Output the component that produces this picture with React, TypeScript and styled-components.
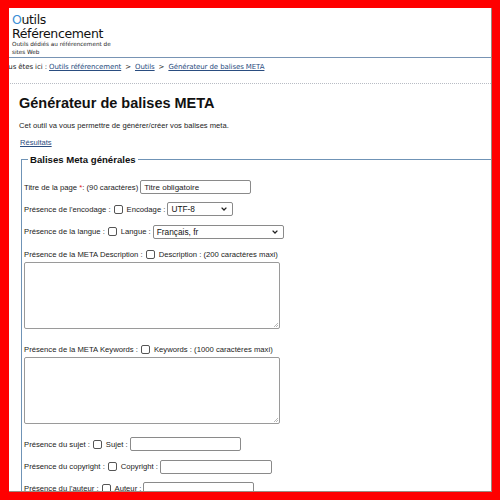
import React from 'react'
import styled, { createGlobalStyle } from 'styled-components'

const GlobalStyle = createGlobalStyle`
  html, body {
    margin: 0;
    padding: 0;
    background: #ff0000;
  }
  body {
    font-family: "Liberation Sans", Arial, sans-serif;
    color: #222;
  }
`

const Viewport = styled.div`
  margin: 8px 0 0 9px;
  width: 482px;
  height: 483px;
  overflow: hidden;
  background: #fff;
  border-right: 1px solid #9a8a80;
  border-bottom: 1px solid #9a8a80;
`

const Header = styled.header`
  box-sizing: border-box;
  padding: 5px 0 0 3px;
  border-bottom: 1px solid #7894b4;
  height: 50px;
`

const SiteTitle = styled.div`
  font-family: "DejaVu Sans", sans-serif;
  font-size: 12.5px;
  line-height: 14px;
  letter-spacing: -0.35px;
  color: #111;
  width: 120px;

  span {
    color: #3b8fd6;
  }
`

const SiteTagline = styled.div`
  font-family: "DejaVu Sans", sans-serif;
  font-size: 5.7px;
  line-height: 8px;
  margin-top: -1px;
  width: 102px;
  color: #222;
`

const Breadcrumb = styled.nav`
  font-family: "DejaVu Sans", sans-serif;
  font-size: 7px;
  letter-spacing: -0.1px;
  line-height: 12px;
  margin-left: -9px;
  padding: 3px 0 10px;
  border-bottom: 1px dotted #b8bcc4;
  color: #222;
  white-space: nowrap;

  a {
    color: #2a4d80;
    text-decoration: underline;
  }
`

const Sep = styled.span`
  margin: 0 4px;
`

const Main = styled.main`
  padding: 11px 0 0 10px;
`

const Title = styled.h1`
  font-family: "Liberation Sans", Arial, sans-serif;
  font-size: 14.5px;
  font-weight: bold;
  margin: 0 0 10px;
  color: #111;
`

const Intro = styled.p`
  font-size: 7.6px;
  margin: 0 0 1px;
  color: #222;
`

const ResultsLink = styled.a`
  display: inline-block;
  font-size: 7.6px;
  color: #2a4d80;
  text-decoration: underline;
  margin-left: 1px;
`

const Fieldset = styled.fieldset`
  margin: 5px -60px 0 2px;
  padding: 15px 0 0 2px;
  border: 1px solid #6f93b6;
  border-right: none;
  border-bottom: none;
`

const Legend = styled.legend`
  font-size: 9.6px;
  font-weight: bold;
  color: #111;
  padding: 0 2px;
  margin-left: 4px;
`

const Row = styled.div`
  display: flex;
  align-items: center;
  font-size: 7.7px;
  color: #222;
  height: 14px;
  margin-bottom: 8.4px;
  white-space: nowrap;
`

const Req = styled.span`
  color: #e02020;
`

const TextInput = styled.input<{ w: number }>`
  box-sizing: border-box;
  width: ${(p) => p.w}px;
  height: 14px;
  margin-left: 2px;
  border: 1px solid #8a8a8a;
  border-radius: 2px;
  font-family: "Liberation Sans", Arial, sans-serif;
  font-size: 8px;
  padding: 0 3px;
  color: #222;
`

const Check = styled.span`
  display: inline-block;
  box-sizing: border-box;
  width: 9px;
  height: 9px;
  border: 1px solid #555;
  border-radius: 2px;
  margin: 0 4px 0 3px;
`

const Select = styled.div<{ w: number }>`
  box-sizing: border-box;
  width: ${(p) => p.w}px;
  height: 14px;
  margin-left: 2px;
  border: 1px solid #8a8a8a;
  border-radius: 2px;
  display: flex;
  align-items: center;
  justify-content: space-between;
  padding: 0 5px 0 3px;
  font-size: 8.3px;
  color: #111;

  svg {
    width: 6px;
    height: 4px;
  }
`

const Area = styled.div`
  box-sizing: border-box;
  width: 256px;
  height: 67px;
  border: 1px solid #9a9a9a;
  border-radius: 2px;
  margin: -7.4px 0 13px;
  position: relative;

  svg {
    position: absolute;
    right: 1px;
    bottom: 1px;
    width: 5px;
    height: 5px;
  }
`

function Chevron() {
  return (
    <svg viewBox="0 0 6 4">
      <path d="M0.6 0.6 L3 3 L5.4 0.6" stroke="#222" strokeWidth="1.3" fill="none" />
    </svg>
  )
}

function Grip() {
  return (
    <svg viewBox="0 0 5 5">
      <path d="M1 5 L5 1 M3 5 L5 3" stroke="#999" strokeWidth="0.7" />
    </svg>
  )
}

export default function App() {
  return (
    <>
      <GlobalStyle />
      <Viewport>
        <Header>
          <SiteTitle>
            <span>O</span>utils Référencement
          </SiteTitle>
          <SiteTagline>Outils dédiés au référencement de sites Web</SiteTagline>
        </Header>
        <Breadcrumb>
          Vous êtes ici : <a href="#">Outils référencement</a>
          <Sep>&gt;</Sep>
          <a href="#">Outils</a>
          <Sep>&gt;</Sep>
          <a href="#">Générateur de balises META</a>
        </Breadcrumb>
        <Main>
          <Title>Générateur de balises META</Title>
          <Intro>Cet outil va vous permettre de générer/créer vos balises meta.</Intro>
          <ResultsLink href="#">Résultats</ResultsLink>
          <Fieldset>
            <Legend>Balises Meta générales</Legend>
            <Row>
              Titre de la page&nbsp;<Req>*</Req>: (90 caractères)
              <TextInput w={111} defaultValue="Titre obligatoire" />
            </Row>
            <Row>
              Présence de l'encodage : <Check /> Encodage :
              <Select w={66}>
                UTF-8 <Chevron />
              </Select>
            </Row>
            <Row>
              Présence de la langue : <Check /> Langue :
              <Select w={131}>
                Français, fr <Chevron />
              </Select>
            </Row>
            <Row>
              Présence de la META Description : <Check /> Description : (200 caractères maxi)
            </Row>
            <Area>
              <Grip />
            </Area>
            <Row>
              Présence de la META Keywords : <Check /> Keywords : (1000 caractères maxi)
            </Row>
            <Area>
              <Grip />
            </Area>
            <Row>
              Présence du sujet : <Check /> Sujet :
              <TextInput w={111} />
            </Row>
            <Row>
              Présence du copyright : <Check /> Copyright :
              <TextInput w={112} />
            </Row>
            <Row>
              Présence du l'auteur : <Check /> Auteur :
              <TextInput w={111} />
            </Row>
          </Fieldset>
        </Main>
      </Viewport>
    </>
  )
}
